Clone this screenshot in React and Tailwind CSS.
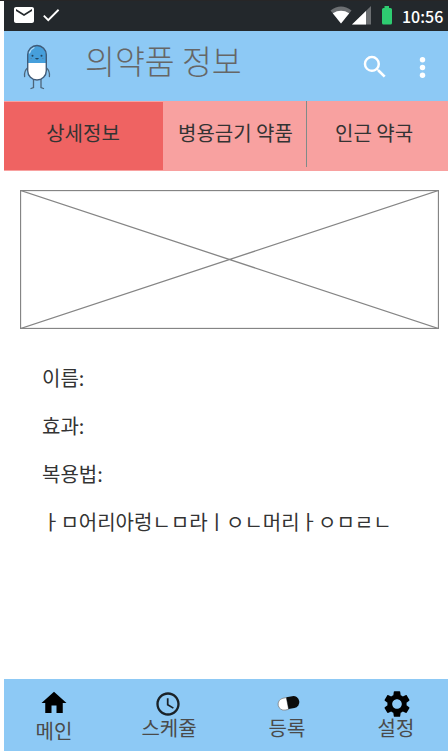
import React from 'react';

function StatusBar() {
  return (
    <div className="ml-1 flex h-[30px] shrink-0 items-start bg-[#23282c] text-white">
      <svg className="ml-[8px] mt-[2px] h-6 w-6 shrink-0" viewBox="0 0 24 24" fill="currentColor">
        <path d="M20 4H4c-1.1 0-2 .9-2 2v12c0 1.100.9 2 2 2h16c1.100 0 2-.9 2-2V6c0-1.100-.9-2-2-2zm0 4l-8 5-8-5V6l8 5 8-5v2z" />
      </svg>
      <svg className="ml-[4px] mt-[3px] h-[22px] w-[22px] shrink-0" viewBox="0 0 24 24" fill="currentColor">
        <path d="M9 16.170L4.830 12l-1.420 1.410L9 19 21 7l-1.410-1.410z" />
      </svg>
      <svg className="ml-[267px] mt-[4px] h-5 w-[24px] shrink-0" viewBox="0 0 24 20">
        <path d="M1.500 5.500Q12 -2.500 22.500 5.500L12 18.500Z" fill="#6c6f72" />
        <path d="M3.800 8.200Q12 3.500 20.200 8.200L12 18.500Z" fill="#fff" />
      </svg>
      <svg className="-ml-[1px] mt-[4px] h-5 w-[20px] shrink-0" viewBox="0 0 20 20">
        <path d="M0 19.500L19 1V19.500Z" fill="#6c6f72" />
        <path d="M0 19.500L14 6V19.500Z" fill="#fff" />
      </svg>
      <svg className="ml-[9px] mt-[4px] h-5 w-3 shrink-0" viewBox="0 0 12 20">
        <path d="M3.500 1H8v2h1.500Q11 3 11 4.500V18q0 1.500-1.500 1.500H2.500Q1 19.500 1 18V4.500Q1 3 2.500 3h1z" fill="#2ecc71" />
      </svg>
      <span className="ml-[9px] mt-[3px] whitespace-nowrap text-base leading-6 font-medium">10:56</span>
    </div>
  );
}

function Mascot() {
  return (
    <svg className="ml-[18px] mt-[12px] h-[48px] w-[30px] shrink-0" viewBox="0 0 30 48" fill="none">
      <path d="M5.500 25Q2 28 2.600 33.500M24.500 25Q28 28 27.400 33.500M11.500 36v8.500l-2.500 1M19 36v8.500l2.500 1" stroke="#4d6478" strokeWidth="1.300" strokeLinecap="round" />
      <path d="M5.700 20V11.500a9.300 9.300 0 0 1 18.600 0V20z" fill="#469fdb" />
      <path d="M5.700 20v8a9.300 9.300 0 0 0 18.600 0v-8z" fill="#fff" />
      <rect x="5.700" y="2.500" width="18.600" height="34.500" rx="9.300" stroke="#405b78" strokeWidth="1.400" />
      <path d="M7.500 10Q8.500 6 12 4.700" stroke="#b5dcf5" strokeWidth="1.200" strokeLinecap="round" />
      <circle cx="10.500" cy="12.800" r="1" fill="#24445f" />
      <circle cx="19.500" cy="12.800" r="1" fill="#24445f" />
      <path d="M13 15Q15 18 17 15z" fill="#23465f" />
      <path d="M8.500 15.500h1.500M20 15.500h1.500" stroke="#5889b0" />
    </svg>
  );
}

function Header() {
  return (
    <header className="ml-1 flex h-[70px] shrink-0 items-start bg-[#8dc9f5]">
      <Mascot />
      <h1 className="ml-[33px] mt-[5px] w-[162px] whitespace-nowrap text-[32.500px] leading-[48px] font-light text-[#666]">의약품 정보</h1>
      <svg className="ml-[113px] mt-[21px] h-[30px] w-[30px] shrink-0" viewBox="0 0 24 24" fill="#fff">
        <path d="M15.500 14h-.79l-.28-.27A6.471 6.471 0 0 0 16 9.500 6.500 6.500 0 1 0 9.500 16c1.610 0 3.090-.59 4.230-1.570l.27.28v.79l5 4.990L20.490 19l-4.990-5zm-6 0C7.010 14 5 11.990 5 9.500S7.010 5 9.500 5 14 7.010 14 9.500 11.990 14 9.500 14z" />
      </svg>
      <svg className="ml-[17px] mt-[21px] h-[31px] w-[31px] shrink-0" viewBox="0 0 24 24" fill="#fff">
        <circle cx="12" cy="6" r="2.100" />
        <circle cx="12" cy="12" r="2.100" />
        <circle cx="12" cy="18" r="2.100" />
      </svg>
    </header>
  );
}

function Tabs() {
  return (
    <nav className="ml-1 flex h-[70px] shrink-0 items-start bg-[#f8a1a0] text-xl leading-6 whitespace-nowrap text-[#333]">
      <div className="mt-px h-[68px] w-[159px] bg-[#ef6362] pt-[19px] pr-px text-center">상세정보</div>
      <div className="h-[66px] w-[144px] border-r border-[#7f8b89] pt-[20px] pl-[15px]">병용금기 약품</div>
      <div className="pt-[20px] pl-[28px]">인근 약국</div>
    </nav>
  );
}

function NavItem({ label, className, children }) {
  return (
    <div className={`flex flex-col items-center ${className}`}>
      {children}
      <span className="whitespace-nowrap text-xl leading-6">{label}</span>
    </div>
  );
}

function BottomNav() {
  return (
    <nav className="ml-1 flex h-[72px] shrink-0 items-start bg-[#8dc9f5] text-[#4a4a4a]">
      <NavItem label="메인" className="ml-[31px] w-[38px] pt-[9px]">
        <svg className="mb-px h-[30px] w-[30px] shrink-0" viewBox="0 0 24 24" fill="#000">
          <path d="M10 20v-6h4v6h5v-8h3L12 3 2 12h3v8z" />
        </svg>
      </NavItem>
      <NavItem label="스케쥴" className="ml-[68px] w-[56px] pt-[11px]">
        <svg className="-mb-[2px] h-[28px] w-[28px] shrink-0 -translate-x-[1px]" viewBox="0 0 24 24" fill="#1a2228">
          <path d="M11.990 2C6.470 2 2 6.480 2 12s4.470 10 9.990 10C17.520 22 22 17.520 22 12S17.520 2 11.990 2zM12 20c-4.420 0-8-3.580-8-8s3.580-8 8-8 8 3.580 8 8-3.580 8-8 8zm.5-13H11v6l5.250 3.150.75-1.230-4.500-2.670z" />
        </svg>
      </NavItem>
      <NavItem label="등록" className="ml-[71px] w-[38px] pt-[12px]">
        <svg className="-mb-[2px] h-[27px] w-[30px] shrink-0" viewBox="0 0 30 27">
          <g transform="rotate(-11 15.500 12.500)">
            <path d="M15.500 6.500h-3.500a6 6 0 0 0 0 12h3.500z" fill="#fff" stroke="#777" strokeWidth=".7" />
            <path d="M15.500 6.200h6a6 6 0 0 1 0 12h-6z" fill="#0b0b0b" />
          </g>
        </svg>
      </NavItem>
      <NavItem label="설정" className="ml-[71px] w-[38px] pt-[9px]">
        <svg className="-mb-[4px] h-[32px] w-[32px] shrink-0 translate-x-[1px]" viewBox="0 0 24 24" fill="#000">
          <path d="M19.140 12.940c.04-.3.060-.61.060-.94 0-.32-.02-.64-.07-.94l2.030-1.580c.18-.14.23-.41.12-.61l-1.920-3.320c-.12-.22-.37-.29-.59-.22l-2.390.96c-.5-.38-1.030-.7-1.620-.94l-.36-2.540c-.04-.24-.24-.41-.48-.41h-3.840c-.24 0-.43.17-.47.41l-.36 2.540c-.59.24-1.130.57-1.620.94l-2.390-.96c-.22-.08-.47 0-.59.22L2.740 8.870c-.12.21-.08.47.12.61l2.030 1.580c-.05.3-.09.63-.09.94s.02.64.07.94l-2.030 1.580c-.18.14-.23.41-.12.61l1.920 3.320c.12.22.37.29.59.22l2.390-.96c.5.38 1.030.7 1.620.94l.36 2.540c.05.24.24.41.48.41h3.840c.24 0 .44-.17.47-.41l.36-2.540c.59-.24 1.130-.56 1.620-.94l2.390.96c.22.08.47 0 .59-.22l1.920-3.320c.12-.22.070-.47-.12-.61l-2.010-1.580zM12 15.600c-1.980 0-3.600-1.620-3.600-3.600s1.620-3.600 3.600-3.600 3.600 1.620 3.600 3.600-1.620 3.600-3.600 3.600z" />
        </svg>
      </NavItem>
    </nav>
  );
}

export default function App() {
  return (
    <div className="flex h-[752px] w-[448px] flex-col overflow-hidden border-t border-[#272627] bg-white font-['Noto_Sans_CJK_KR','Noto_Sans',sans-serif]">
      <StatusBar />
      <Header />
      <Tabs />
      <main className="flex-1">
        <svg className="mt-[19px] ml-5 block h-[139px] w-[419px]" viewBox="0 0 419 139" fill="none" stroke="#858585">
          <rect x=".5" y=".5" width="418" height="138" strokeWidth="1.300" />
          <path d="M.5 .5L418.500 138.500M418.500 .5L.5 138.500" strokeWidth="1.300" />
        </svg>
        <div className="mt-[25px] ml-[42px] text-xl leading-[48px] whitespace-nowrap text-[#333]">
          <p>이름:</p>
          <p>효과:</p>
          <p>복용법:</p>
          <p>ㅏㅁ어리아렁ㄴㅁ라ㅣㅇㄴ머리ㅏㅇㅁㄹㄴ</p>
        </div>
      </main>
      <BottomNav />
      <div className="h-px shrink-0 bg-white" />
    </div>
  );
}
